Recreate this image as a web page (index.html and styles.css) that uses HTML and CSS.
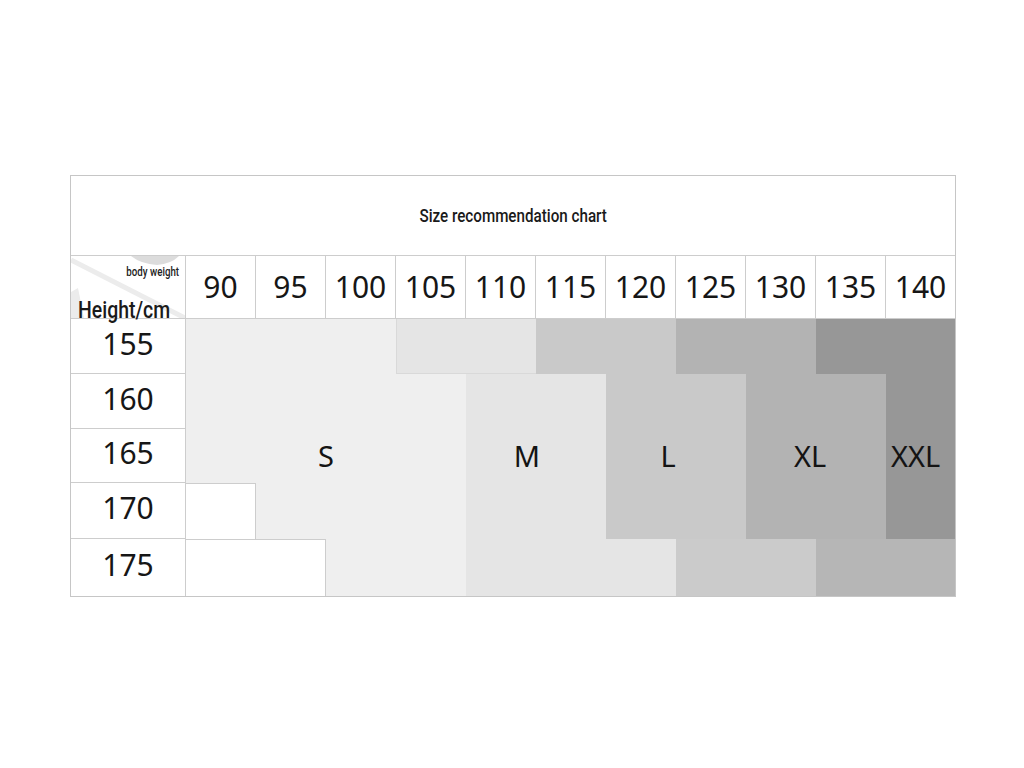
FILE: index.html
```html
<!DOCTYPE html>
<html lang="en">
<head>
<meta charset="utf-8">
<title>Size recommendation chart</title>
<link rel="stylesheet" href="styles.css">
</head>
<body>
<div class="page">
  <div class="chart">
    <div class="title"><span class="title-text">Size recommendation chart</span></div>
    <div class="head">
      <div class="corner">
        <svg class="swoosh" viewBox="0 0 114 62" preserveAspectRatio="none" aria-hidden="true">
          <line x1="0" y1="4" x2="114" y2="62" stroke="#ececec" stroke-width="5"/>
          <path d="M60 0 L108 0 Q100 8 86 9 Q70 8 60 0 Z" fill="#dcdcdc"/>
          <path d="M0 36 L7 32 L13 62 L0 62 Z" fill="#ececec"/>
        </svg>
        <span class="bw">body weight</span>
        <span class="hc">Height/cm</span>
      </div>
      <div class="hcell">90</div>
      <div class="hcell">95</div>
      <div class="hcell">100</div>
      <div class="hcell">105</div>
      <div class="hcell">110</div>
      <div class="hcell">115</div>
      <div class="hcell">120</div>
      <div class="hcell">125</div>
      <div class="hcell">130</div>
      <div class="hcell">135</div>
      <div class="hcell last">140</div>
    </div>
    <div class="main">
      <div class="rows">
        <div class="rl">155</div>
        <div class="rl">160</div>
        <div class="rl">165</div>
        <div class="rl">170</div>
        <div class="rl last">175</div>
      </div>
      <div class="data">
        <!-- 155 -->
        <div class="c s"></div><div class="c s"></div><div class="c s"></div>
        <div class="c m bl bb"></div><div class="c m bb"></div>
        <div class="c l"></div><div class="c l"></div>
        <div class="c xl"></div><div class="c xl"></div>
        <div class="c xxl"></div><div class="c xxl"></div>
        <!-- 160 -->
        <div class="c s"></div><div class="c s"></div><div class="c s"></div><div class="c s"></div>
        <div class="c m"></div><div class="c m"></div>
        <div class="c l"></div><div class="c l"></div>
        <div class="c xl"></div><div class="c xl"></div>
        <div class="c xxl"></div>
        <!-- 165 -->
        <div class="c s"></div><div class="c s"></div><div class="c s"></div><div class="c s"></div>
        <div class="c m"></div><div class="c m"></div>
        <div class="c l"></div><div class="c l"></div>
        <div class="c xl"></div><div class="c xl"></div>
        <div class="c xxl"></div>
        <!-- 170 -->
        <div class="c w bt br"></div>
        <div class="c s"></div><div class="c s"></div><div class="c s"></div>
        <div class="c m"></div><div class="c m"></div>
        <div class="c l"></div><div class="c l"></div>
        <div class="c xl"></div><div class="c xl"></div>
        <div class="c xxl"></div>
        <!-- 175 -->
        <div class="c w bt"></div><div class="c w bt br"></div>
        <div class="c s"></div><div class="c s"></div>
        <div class="c m"></div><div class="c m"></div><div class="c m"></div>
        <div class="c l2"></div><div class="c l2"></div>
        <div class="c xl2"></div><div class="c xl2"></div>

        <div class="lab lab-s">S</div>
        <div class="lab lab-m">M</div>
        <div class="lab lab-l">L</div>
        <div class="lab lab-xl">XL</div>
        <div class="lab lab-xxl">XXL</div>
      </div>
    </div>
  </div>
</div>
</body>
</html>
```
FILE: styles.css
```css
html, body {
  margin: 0;
  padding: 0;
  background: #ffffff;
}

body {
  font-family: "Noto Sans", "Open Sans", "DejaVu Sans", sans-serif;
  color: #161616;
}

.page {
  padding: 175px 0 0 70px;
}

.chart {
  width: 886px;
  box-sizing: border-box;
  border: 1px solid #c6c6c6;
}

.title {
  height: 79px;
  border-bottom: 1px solid #cdcdcd;
  display: flex;
  align-items: center;
  justify-content: center;
}

.title-text {
  display: inline-block;
  font-family: "Roboto", "Liberation Sans", sans-serif;
  font-weight: 500;
  font-size: 19px;
  color: #1a1a1a;
  transform: scaleX(0.8);
  transform-origin: center;
}

.head {
  display: grid;
  grid-template-columns: 115px repeat(10, 70px) 69px;
  height: 62px;
  border-bottom: 1px solid #cdcdcd;
}

.corner {
  position: relative;
  border-right: 1px solid #cdcdcd;
  display: flex;
  flex-direction: column;
  justify-content: space-between;
  font-family: "Roboto", "Liberation Sans", sans-serif;
}

.swoosh {
  position: absolute;
  left: 0;
  top: 0;
  width: 100%;
  height: 100%;
}

.bw {
  position: relative;
  align-self: flex-end;
  margin: 9px 6px 0 0;
  font-size: 12px;
  line-height: 14px;
  font-weight: 500;
  color: #222;
  transform: scaleX(0.81);
  transform-origin: right center;
}

.hc {
  position: relative;
  align-self: flex-start;
  margin: 0 0 -6px 7px;
  font-size: 24px;
  line-height: 28px;
  font-weight: 500;
  color: #1a1a1a;
  transform: scaleX(0.81);
  transform-origin: left center;
}

.hcell {
  display: flex;
  align-items: center;
  justify-content: center;
  border-right: 1px solid #cdcdcd;
  font-size: 30px;
  padding-bottom: 1px;
}

.hcell.last {
  border-right: none;
}

.main {
  display: grid;
  grid-template-columns: 115px 769px;
}

.rows {
  display: grid;
  grid-template-rows: 55px 55px 54px 56px 57px;
}

.rl {
  display: flex;
  align-items: center;
  justify-content: center;
  border-right: 1px solid #cdcdcd;
  border-bottom: 1px solid #cdcdcd;
  font-size: 30px;
  padding-bottom: 6px;
  box-sizing: border-box;
}

.rl.last {
  border-bottom: none;
}

.data {
  position: relative;
  display: grid;
  grid-template-columns: repeat(10, 70px) 69px;
  grid-template-rows: 55px 55px 54px 56px 57px;
}

.c {
  box-sizing: border-box;
}

.s { background: #efefef; }
.m { background: #e5e5e5; }
.l { background: #c9c9c9; }
.l2 { background: #cbcbcb; }
.xl { background: #b3b3b3; }
.xl2 { background: #b6b6b6; }
.xxl { background: #979797; }
.w { background: #ffffff; }

.bt { border-top: 1px solid #cdcdcd; }
.br { border-right: 1px solid #cdcdcd; }
.bl { border-left: 1px solid #d9d9d9; }
.bb { border-bottom: 1px solid #d9d9d9; }

.lab {
  position: absolute;
  inset: 0;
  grid-row: 3 / 4;
  display: flex;
  align-items: center;
  justify-content: center;
  font-size: 29px;
  color: #141414;
  padding-bottom: 2px;
}

.lab-s { grid-column: 2 / 4; }
.lab-m { grid-column: 5 / 7; padding-right: 18px; }
.lab-l { grid-column: 7 / 9; padding-right: 16px; }
.lab-xl { grid-column: 9 / 11; padding-right: 12px; }
.lab-xxl { grid-column: 11 / 12; padding-right: 10px; }
```
